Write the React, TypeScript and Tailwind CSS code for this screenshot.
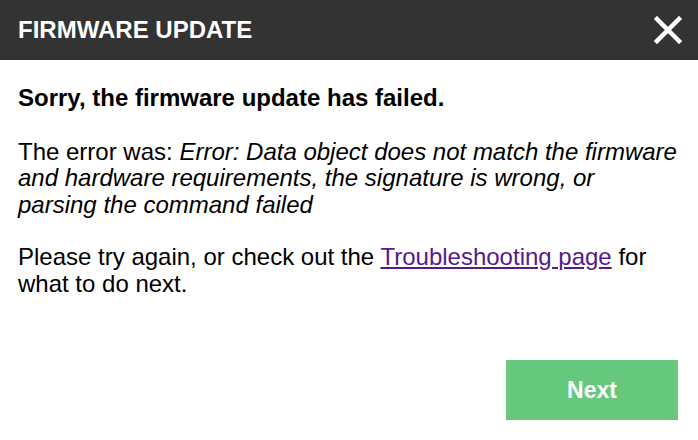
export default function App() {
  return (
    <div className="w-[698px] h-[440px] bg-white flex flex-col font-['Liberation_Sans',Arial,sans-serif] text-black">
      <div className="h-[60px] bg-[#333333] flex items-center justify-between pl-[18px] pr-[16px] shrink-0">
        <h1 className="text-white font-bold text-[24px] leading-none uppercase">Firmware Update</h1>
        <svg width="28" height="28" viewBox="0 0 28 28">
          <path d="M3 3 L25 25 M25 3 L3 25" stroke="white" strokeWidth="4.5" strokeLinecap="square" />
        </svg>
      </div>
      <div className="flex-1 flex flex-col pl-[18px] pr-[20px] pt-[25px] text-[24px] leading-[26.5px]">
        <p className="font-bold">Sorry, the firmware update has failed.</p>
        <p className="mt-[27px]">
          The error was:{' '}
          <em>
            Error: Data object does not match the firmware and hardware requirements, the signature is wrong, or
            parsing the command failed
          </em>
        </p>
        <p className="mt-[26px]">
          Please try again, or check out the{' '}
          <a href="#" className="text-[#551a8b] underline">
            Troubleshooting page
          </a>{' '}
          for what to do next.
        </p>
        <div className="flex justify-end mt-auto pb-[20px]">
          <button className="w-[172px] h-[60px] bg-[#66c87c] text-white font-bold text-[23px]">Next</button>
        </div>
      </div>
    </div>
  );
}
